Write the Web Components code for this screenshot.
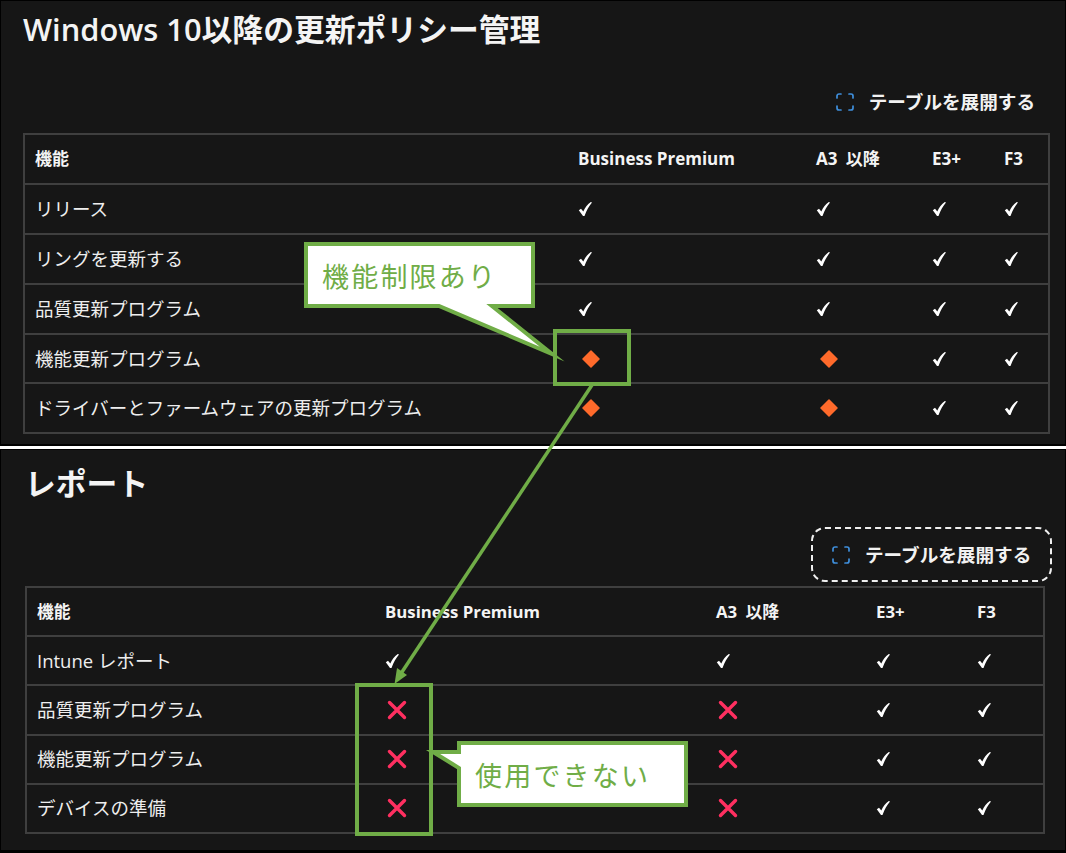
<!DOCTYPE html>
<html lang="ja"><head><meta charset="utf-8"><title>Intune</title>
<style>
html,body{margin:0;padding:0;background:#fff}
body{width:1066px;height:853px;overflow:hidden;font-family:"Open Sans","Noto Sans CJK JP",sans-serif;color:#f2f2f2}
</style></head><body>
<x-page>
<x-panel title-text="Windows 10以降の更新ポリシー管理" pad-left="23" pad-right="16" btn-right="15" title-top="6" btn-top="40" tbl-top="19" height="446" bottom="2" style="--cols:543px 238px 116px 72px 1fr;--row:49.9px;--head:17px">
  <x-row head><span>機能</span><span>Business Premium</span><span style="word-spacing:4px">A3 以降</span><span>E3+</span><span>F3</span></x-row>
  <x-row><span>リリース</span><x-icon name="check"></x-icon><x-icon name="check"></x-icon><x-icon name="check"></x-icon><x-icon name="check"></x-icon></x-row>
  <x-row><span>リングを更新する</span><x-icon name="check"></x-icon><x-icon name="check"></x-icon><x-icon name="check"></x-icon><x-icon name="check"></x-icon></x-row>
  <x-row><span>品質更新プログラム</span><x-icon name="check"></x-icon><x-icon name="check"></x-icon><x-icon name="check"></x-icon><x-icon name="check"></x-icon></x-row>
  <x-row><span>機能更新プログラム</span><x-icon name="diamond"></x-icon><x-icon name="diamond"></x-icon><x-icon name="check"></x-icon><x-icon name="check"></x-icon></x-row>
  <x-row><span>ドライバーとファームウェアの更新プログラム</span><x-icon name="diamond"></x-icon><x-icon name="diamond"></x-icon><x-icon name="check"></x-icon><x-icon name="check"></x-icon></x-row>
</x-panel>
<x-panel title-text="レポート" pad-left="25" pad-right="21" btn-right="-7" title-top="11" btn-top="23" tbl-top="4" height="404" bottom="3" dashed style="--cols:348px 331px 160px 101px 1fr;--row:49.2px;--head:16.800px">
  <x-row head><span>機能</span><span>Business Premium</span><span style="word-spacing:4px">A3 以降</span><span>E3+</span><span>F3</span></x-row>
  <x-row><span>Intune レポート</span><x-icon name="check"></x-icon><x-icon name="check"></x-icon><x-icon name="check"></x-icon><x-icon name="check"></x-icon></x-row>
  <x-row><span>品質更新プログラム</span><x-icon name="cross"></x-icon><x-icon name="cross"></x-icon><x-icon name="check"></x-icon><x-icon name="check"></x-icon></x-row>
  <x-row><span>機能更新プログラム</span><x-icon name="cross"></x-icon><x-icon name="cross"></x-icon><x-icon name="check"></x-icon><x-icon name="check"></x-icon></x-row>
  <x-row><span>デバイスの準備</span><x-icon name="cross"></x-icon><x-icon name="cross"></x-icon><x-icon name="check"></x-icon><x-icon name="check"></x-icon></x-row>
</x-panel>
<x-annotations></x-annotations>
</x-page>
<script>
class XPage extends HTMLElement{constructor(){super();this.attachShadow({mode:'open'}).innerHTML=`<style>:host{display:flex;flex-direction:column;gap:3px;position:relative;width:1066px;height:853px;background:#fff}</style><slot></slot>`}}
class XPanel extends HTMLElement{connectedCallback(){
  if(this.shadowRoot)return;
  const a=n=>this.getAttribute(n);
  this.attachShadow({mode:'open'}).innerHTML=`<style>
  :host{display:flex;flex-direction:column;flex:none;box-sizing:border-box;background:#161616;border:1px solid #000;border-bottom-width:${a('bottom')}px;height:${a('height')}px;padding:0 ${+a('pad-right')-1}px 0 ${+a('pad-left')-1}px}
  h2{margin:${a('title-top')}px 0 0;font-size:30.800px;line-height:44px;font-weight:600;color:#f4f4f4;white-space:nowrap}
  x-expand{flex:none;align-self:flex-end;margin-top:${a('btn-top')-1}px;margin-right:${a('btn-right')}px}
  .t{flex:none;margin-top:${a('tbl-top')}px;border:2px solid #3f3f3f;border-bottom-width:0}
  </style><h2>${a('title-text')}</h2><x-expand ${this.hasAttribute('dashed')?'dashed':''}>テーブルを展開する</x-expand><div class="t"><slot></slot></div>`;
}}
class XExpand extends HTMLElement{constructor(){super();this.attachShadow({mode:'open'}).innerHTML=`<style>
  :host{display:inline-flex;align-items:center;gap:15px;height:24px;font-size:18.600px;line-height:24px;font-weight:600;color:#f2f2f2;white-space:nowrap}
  :host([dashed]){box-sizing:border-box;width:241px;height:55px;padding-left:19px;border:2.500px dashed #f0f0f0;border-radius:14px}
  svg{display:block;flex:none}
  </style><svg width="18" height="18" viewBox="0 0 18 18" fill="none" stroke="#3f8fdc" stroke-width="1.700" stroke-linecap="round"><path d="M1 5V3a2 2 0 0 1 2-2h2M13 1h2a2 2 0 0 1 2 2v2M17 13v2a2 2 0 0 1-2 2h-2M5 17H3a2 2 0 0 1-2-2v-2"/></svg><slot></slot>`}}
class XRow extends HTMLElement{constructor(){super();this.attachShadow({mode:'open'}).innerHTML=`<style>
  :host{display:grid;grid-template-columns:var(--cols);align-items:center;box-sizing:border-box;height:var(--row);border-bottom:2px solid #3f3f3f;font-size:18.500px;line-height:24px;color:#eee;white-space:nowrap}
  :host([head]){font-size:var(--head);font-weight:700;color:#f4f4f4}
  ::slotted(*){padding-left:10px}
  </style><slot></slot>`}}
const ICONS={
 check:`<svg width="16" height="16" viewBox="0 0 16 16"><path fill="#fff" d="M.8 9.200 3 7.800l2.300 2.700C7 6.800 9.200 3.500 12.800 1l1.200.6C10.800 5.400 8.600 9.500 6.500 15H5Z"/></svg>`,
 diamond:`<svg width="18" height="18" viewBox="0 0 18 18" style="margin-left:4px"><path fill="#ff6a2b" stroke="#ff6a2b" stroke-width="1.500" stroke-linejoin="round" d="M9 1 17 9 9 17 1 9Z"/></svg>`,
 cross:`<svg width="20" height="20" viewBox="0 0 20 20" style="margin-left:2px"><path fill="none" stroke="#ff2f60" stroke-width="3.400" stroke-linecap="round" d="M2.500 2.500 17.500 17.500M17.500 2.500 2.500 17.500"/></svg>`};
class XIcon extends HTMLElement{connectedCallback(){if(this.shadowRoot)return;this.attachShadow({mode:'open'}).innerHTML=`<style>:host{display:flex;align-items:center}svg{display:block}</style>${ICONS[this.getAttribute('name')]}`}}
class XCallout extends HTMLElement{connectedCallback(){if(this.shadowRoot)return;
  const w=+this.getAttribute('w'),h=+this.getAttribute('h'),pad=+this.getAttribute('pad');
  this.attachShadow({mode:'open'}).innerHTML=`<style>
  :host{position:absolute;left:${this.getAttribute('x')}px;top:${this.getAttribute('y')}px;width:${w}px;height:${h}px;display:flex;align-items:center;padding-left:${pad}px;box-sizing:border-box;font-size:27px;letter-spacing:2.200px;color:#70ad47;font-family:"Noto Sans CJK JP",sans-serif;font-weight:400;white-space:nowrap}
  svg{position:absolute;left:0;top:0;overflow:visible}
  span{position:relative}
  </style><svg width="${w}" height="${h}"><polygon points="${this.getAttribute('points')}" fill="#fff" stroke="#70ad47" stroke-width="4" stroke-linejoin="miter" stroke-miterlimit="10"/></svg><span><slot></slot></span>`}}
class XAnnotations extends HTMLElement{constructor(){super();this.attachShadow({mode:'open'}).innerHTML=`<style>
  :host{position:absolute;inset:0;display:block;pointer-events:none}
  svg{position:absolute;left:0;top:0}
  </style><svg width="1066" height="853" fill="none" stroke="#70ad47" stroke-width="4">
  <rect x="555" y="331" width="74" height="53"/>
  <rect x="357" y="685" width="74" height="149"/>
  <line x1="592" y1="385" x2="400" y2="675" stroke-width="3.500"/>
  <polygon points="394.500,684 397,668 407,675" fill="#70ad47" stroke="none"/>
  </svg>
  <x-callout x="304" y="242" w="231" h="66" pad="18" points="2,2 229,2 229,64 188,64 248,112 135,64 2,64">機能制限あり</x-callout>
  <x-callout x="457" y="741" w="231" h="66" pad="18" points="2,2 229,2 229,64 2,64 2,27 -24,11 2,11">使用できない</x-callout>`}}
customElements.define('x-page',XPage);
customElements.define('x-expand',XExpand);
customElements.define('x-row',XRow);
customElements.define('x-icon',XIcon);
customElements.define('x-callout',XCallout);
customElements.define('x-annotations',XAnnotations);
customElements.define('x-panel',XPanel);
</script>
</body></html>
